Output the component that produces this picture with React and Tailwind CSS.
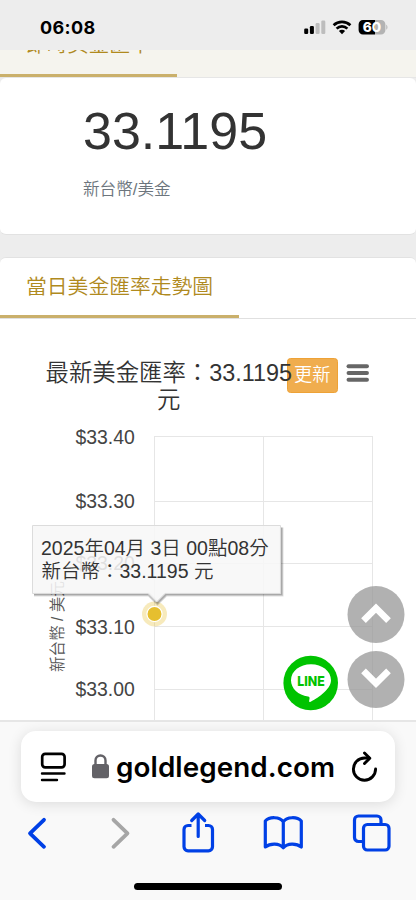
const CJK = "font-['Liberation_Sans','Noto_Sans_CJK_TC',sans-serif] font-[350]";

const yTicks = [
  { label: "$33.40", line: 436.5, base: 443.5 },
  { label: "$33.30", line: 501.5, base: 507.5 },
  { label: "$33.20", line: 563.5, base: 569.5 },
  { label: "$33.10", line: 626.5, base: 633.5 },
  { label: "$33.00", line: 689.5, base: 695.5 },
];

function StatusBar() {
  return (
    <header className="h-[50px] shrink-0 bg-[#ededed] flex items-center justify-between pl-10 pr-[28px] pt-[5px]">
      <span className="font-['Inter',sans-serif] font-bold text-[18px] leading-none tracking-[0.35px] text-black">06:08</span>
      <svg width="92" height="24" viewBox="0 0 92 24" className="mt-[-1px]">
        <rect x="8.2" y="13.5" width="4" height="5.5" rx="1.2" fill="#000" />
        <rect x="13.9" y="11" width="4" height="8" rx="1.2" fill="#000" />
        <rect x="19.6" y="8" width="4" height="11" rx="1.2" fill="#bdbdbd" />
        <rect x="25.3" y="5.5" width="4" height="13.5" rx="1.2" fill="#bdbdbd" />
        <g fill="none" stroke="#000" strokeWidth="2.7">
          <path d="M37.6 10.2a12.2 12.2 0 0 1 16.8 0" />
          <path d="M40.6 13.6a7.8 7.8 0 0 1 10.8 0" />
        </g>
        <path d="M46 19.2l-3.1-3.2a4.4 4.4 0 0 1 6.2 0z" fill="#000" />
        <path d="M67 5h12v14.5H67a4.4 4.4 0 0 1-4.4-4.4V9.4A4.4 4.4 0 0 1 67 5z" fill="#000" />
        <path d="M79 5h6a4.4 4.4 0 0 1 4.4 4.4v5.7a4.4 4.4 0 0 1-4.4 4.4h-6z" fill="#b3b3b3" />
        <path d="M90.3 9.8c1.5.5 1.5 4.4 0 4.9z" fill="#b3b3b3" />
        <text x="76" y="17.1" textAnchor="middle" fontFamily="Inter, sans-serif" fontWeight="800" fontSize="13.6" fill="#fff">
          60
        </text>
      </svg>
    </header>
  );
}

function RatePanel() {
  return (
    <>
      <div className="h-[28px] shrink-0 overflow-hidden bg-[#f5f4ee] flex flex-col justify-end border-b border-[#e6e6e6]">
        <div className="w-[177px] h-[60px] shrink-0 border-b-[3px] border-[#cab06b] pl-[26px]">
          <span className="block pt-[15px] text-[20.8px] leading-[26px] text-[#b08a1e] whitespace-nowrap">即時美金匯率</span>
        </div>
      </div>
      <section className="h-[157px] shrink-0 bg-white rounded-[6px] border-b border-[#e2e2e2] pl-[83px] pt-[24px]">
        <p className="text-[52px] leading-[58px] text-[#333]">33.1195</p>
        <p className="mt-[18px] text-[16.6px] leading-[24px] text-[#6c757d]">新台幣/美金</p>
      </section>
    </>
  );
}

function Chart() {
  return (
    <svg width="416" height="401" viewBox="0 319 416 401" className="block">
      <g stroke="#e6e6e6" strokeWidth="1">
        {yTicks.map((t) => (
          <line key={t.label} x1="154" x2="373" y1={t.line} y2={t.line} />
        ))}
        <line x1="154.5" x2="154.5" y1="436" y2="720" />
        <line x1="263.5" x2="263.5" y1="436" y2="720" />
        <line x1="372.5" x2="372.5" y1="436" y2="720" />
      </g>

      <g fontSize="19.4" fill="#444" textAnchor="end">
        {yTicks.map((t) => (
          <text key={t.label} x="134.8" y={t.base}>
            {t.label}
          </text>
        ))}
      </g>
      <text transform="translate(63 672) rotate(-90)" fontSize="15.6" fill="#555">
        新台幣 / 美元
      </text>

      <rect x="287.5" y="358.5" width="50" height="34" rx="3" fill="#f0ad4e" stroke="#eea236" />
      <text x="294" y="380.5" fontSize="18.2" fill="#fff">更新</text>

      <g fontSize="23.4" fill="#333" textAnchor="middle">
        <text x="168.8" y="380.5">最新美金匯率：33.1195</text>
        <text x="168.8" y="407.5">元</text>
      </g>
      <g stroke="#666" strokeWidth="3.9" strokeLinecap="round">
        <line x1="348.5" x2="367" y1="366.2" y2="366.2" />
        <line x1="348.5" x2="367" y1="373" y2="373" />
        <line x1="348.5" x2="367" y1="379.8" y2="379.8" />
      </g>

      <circle cx="154.5" cy="614" r="12.5" fill="#e6bf2f" fillOpacity="0.32" />
      <circle cx="154.5" cy="614" r="7.6" fill="#e6bf2f" stroke="#fff" strokeWidth="1.2" />

      {/* tooltip: stacked strokes give the soft edge on its right and bottom */}
      <g fill="none" stroke="#000" strokeOpacity="0.13" transform="translate(1 1)">
        <path d="M33 593.5H148L156.5 602L165 593.5H280.5V526.5" strokeWidth="4" />
        <path d="M33 593.5H148L156.5 602L165 593.5H280.5V526.5" strokeWidth="2.6" />
        <path d="M33 593.5H148L156.5 602L165 593.5H280.5V526.5" strokeWidth="1.2" />
      </g>
      <path
        d="M32.5 525.5H280.5V593.5H165L156.5 602L148 593.5H32.5Z"
        fill="#f7f7f7"
        fillOpacity="0.87"
        stroke="#dcdcdc"
      />
      <g fontSize="19.5" fill="#333">
        <text x="41" y="554.5">2025年04月 3日 00點08分</text>
        <text x="41.5" y="578">新台幣：33.1195 元</text>
      </g>
    </svg>
  );
}

function ChartPanel() {
  return (
    <section className="mt-[22px] h-[463px] shrink-0 bg-white rounded-t-[6px] border-t border-[#e2e2e2]">
      <div className="h-[61px] border-b border-[#e0e0e0]">
        <div className="h-[60px] w-[239px] border-b-[3px] border-[#cab06b] pl-[26px] pt-[16px]">
          <h2 className="font-[350] text-[20.8px] leading-[26px] text-[#b08a1e] whitespace-nowrap">當日美金匯率走勢圖</h2>
        </div>
      </div>
      <Chart />
    </section>
  );
}

function FloatingButtons() {
  return (
    <>
      <svg className="absolute left-[283px] top-[655px]" width="56" height="56" viewBox="0 0 56 56">
        <circle cx="27.7" cy="28" r="27.3" fill="#00c300" />
        <path
          d="M28 9.2C16.8 9.2 8 16 8 25.2c0 8.3 7.2 14.9 17 16.2 1.5.3 1.7 1 1.5 2.4l-.4 2.2c-.1.9.4 1.3 1.5.7C32.5 44.3 48 35 48 25.2 48 16 39.2 9.2 28 9.2z"
          fill="#fff"
        />
        <text
          x="28"
          y="31.2"
          textAnchor="middle"
          textLength="27.5"
          lengthAdjust="spacingAndGlyphs"
          fontFamily="Inter, sans-serif"
          fontWeight="800"
          fontSize="13.5"
          fill="#00c300"
        >
          LINE
        </text>
      </svg>
      <div className="absolute left-[347px] top-[586px] flex flex-col gap-2">
        <svg width="58" height="57" viewBox="0 0 58 57">
          <circle cx="29" cy="28.5" r="28.5" fill="#999" fillOpacity="0.76" />
          <path d="M16.5 34.7L29 22.2L41.5 34.7" fill="none" stroke="#fff" strokeWidth="6.6" />
        </svg>
        <svg width="58" height="57" viewBox="0 0 58 57">
          <circle cx="29" cy="28.5" r="28.5" fill="#999" fillOpacity="0.76" />
          <path d="M16.5 19.8L29 32.3L41.5 19.8" fill="none" stroke="#fff" strokeWidth="6.6" />
        </svg>
      </div>
    </>
  );
}

function BrowserBar() {
  return (
    <footer className="h-[180px] shrink-0 bg-[#f9f9f9] border-t-2 border-[#e6e6e6] flex flex-col">
      <div className="mt-[9px] mx-[21px] h-[71px] rounded-[15px] bg-white shadow-[0_2px_14px_rgba(0,0,0,0.12)] flex items-center">
        <svg className="ml-[19px]" width="27" height="30" viewBox="0 0 27 30" fill="none" stroke="#000" strokeLinecap="round">
          <rect x="2.2" y="1.8" width="22.4" height="13.5" rx="3" strokeWidth="2.7" />
          <path d="M2 21.5h22.5M2 28h15" strokeWidth="2.4" />
        </svg>
        <svg className="ml-[24px]" width="19" height="25" viewBox="0 0 19 25">
          <rect x="1" y="10" width="17" height="14.2" rx="2.5" fill="#636267" />
          <path d="M4.5 11V6.5a5 5 0 0 1 10 0V11" fill="none" stroke="#636267" strokeWidth="2.4" />
        </svg>
        <span className="mt-px ml-[6px] w-[220px] font-['Inter',sans-serif] font-semibold text-[27.8px] leading-[34px] tracking-[0.1px] text-black">
          goldlegend.com
        </span>
        <svg className="ml-[14px]" width="28" height="32" viewBox="0 0 28 32" fill="none" stroke="#000" strokeWidth="2.9" strokeLinecap="round" strokeLinejoin="round">
          <path d="M25.6 18A11.1 11.1 0 1 1 14.5 7H19" />
          <path d="M14.5 2L19.8 7.2L14.5 12.5" />
        </svg>
      </div>
      <svg className="mt-[8px] shrink-0" width="416" height="46" viewBox="0 810 416 46" fill="none" stroke="#0040e6" strokeWidth="3.2" strokeLinecap="round" strokeLinejoin="round">
        <path d="M44 819.8L30 833.3L44 846.8" strokeWidth="3.8" />
        <path d="M113.5 819.8L127.5 833.3L113.5 846.8" strokeWidth="3.8" stroke="#a6a6a6" />
        <path d="M191.5 825.5H188a4 4 0 0 0-4 4v17.3a4 4 0 0 0 4 4h20.5a4 4 0 0 0 4-4v-17.3a4 4 0 0 0-4-4H205" strokeLinecap="butt" />
        <path d="M198.2 836.5V815M191.7 820.5L198.2 814L204.7 820.5" />
        <path d="M283.3 821.8c-3.5-5.3-14-5.3-18-.8v26c5-4 14-4 18 .8c4-4.8 13-4.8 18-.8v-26c-4-4.5-14.5-4.5-18 .8zM283.3 821.8v25.5" />
        <rect x="363.5" y="824.5" width="25.5" height="25.5" rx="3.8" />
        <path d="M362.5 841.5h-4a4 4 0 0 1-4-4v-17.5a4 4 0 0 1 4-4h18.5a4 4 0 0 1 4 4v3.5" />
      </svg>
      <div className="mt-[27px] mx-auto h-[7px] w-[148px] rounded-full bg-black" />
    </footer>
  );
}

export default function App() {
  return (
    <div className={`relative flex flex-col w-[416px] h-[900px] overflow-hidden bg-[#ededed] ${CJK}`} lang="zh-Hant">
      <StatusBar />
      <RatePanel />
      <ChartPanel />
      <BrowserBar />
      <FloatingButtons />
    </div>
  );
}
